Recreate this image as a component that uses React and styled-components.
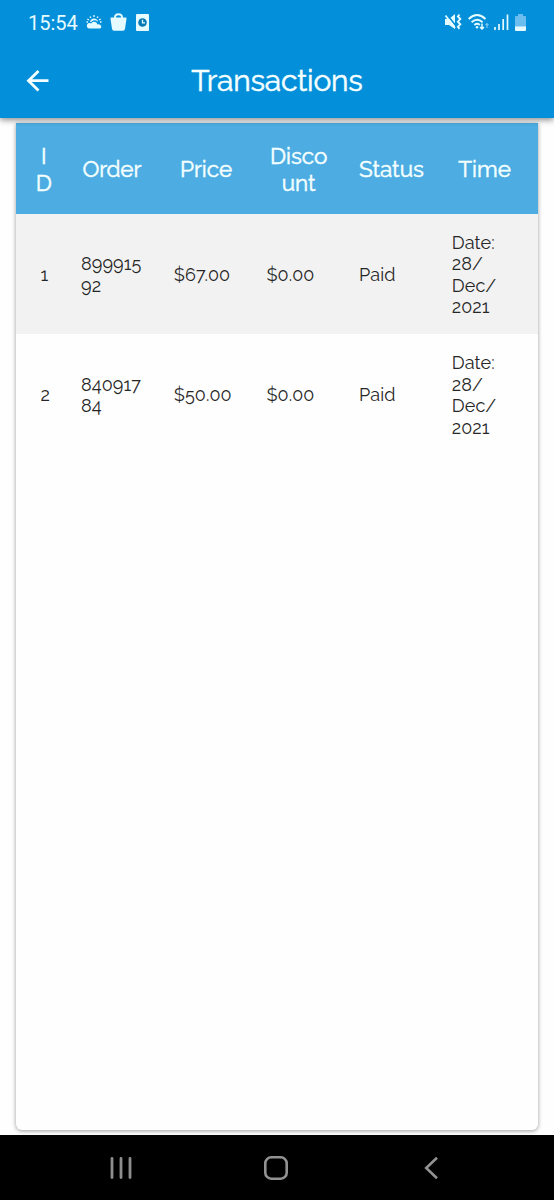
import React from "react";
import styled, { createGlobalStyle } from "styled-components";

const Global = createGlobalStyle`
  * { box-sizing: border-box; }
  html, body { margin: 0; background: #fff; }
  body { font-family: Raleway, Lato, "Open Sans", sans-serif; }
`;

const Screen = styled.div`
  width: 554px;
  height: 1200px;
  display: flex;
  flex-direction: column;
  background: #fefefe;
  overflow: hidden;
`;

const TopBar = styled.header`
  position: relative;
  flex: 0 0 118px;
  background: #048fda;
  color: #f4ffff;
  box-shadow: 0 2px 6px rgba(0, 0, 0, 0.45);
  z-index: 1;
`;

const StatusBar = styled.div`
  height: 44px;
  padding: 0 28px 0 28px;
  display: flex;
  align-items: center;
  justify-content: space-between;
  color: #e6fbff;
`;

const StatusGroup = styled.div`
  display: flex;
  align-items: center;
`;

const Clock = styled.span`
  font: 400 20px/24px Roboto, sans-serif;
  width: 58px;
  padding-top: 2px;
`;

const Icon = styled.svg`
  display: block;
  flex: none;
  overflow: visible;
  margin-right: ${(p) => p.$gap || 0}px;
`;

const TitleRow = styled.div`
  height: 74px;
  display: grid;
  grid-template-columns: 76px 1fr 76px;
  align-items: center;
`;

const BackButton = styled.button`
  border: 0;
  padding: 0 0 0 26px;
  background: none;
  color: inherit;
`;

const Title = styled.h1`
  margin: 0;
  text-align: center;
  font-size: 30px;
  line-height: 36px;
  font-weight: 400;
  letter-spacing: -0.2px;
  -webkit-text-stroke: 0.5px currentColor;
`;

const Content = styled.main`
  flex: 1;
  padding: 5px 16px 5px;
`;

const Card = styled.section`
  height: 100%;
  border-radius: 0 0 6px 6px;
  background: #fefefe;
  box-shadow: 0 1px 4px rgba(0, 0, 0, 0.4);
  overflow: hidden;
`;

const Row = styled.div`
  display: grid;
  grid-template-columns: 43.5px repeat(5, 92.7px);
  align-items: center;
  padding-left: 7px;
  height: 120.3px;
  color: #262626;
  background: ${(p) => (p.$shaded ? "#f2f2f2" : "transparent")};
`;

const HeadRow = styled(Row)`
  height: 90.7px;
  color: #f4ffff;
  background: #4dade2;
`;

const HeadCell = styled.div`
  text-align: center;
  font-size: 22.5px;
  line-height: 27px;
  white-space: pre-line;
  letter-spacing: ${(p) => p.$tracking || 0}px;
  -webkit-text-stroke: 0.5px currentColor;
  padding: 3px ${(p) => p.$right || 0}px 0 ${(p) => p.$left || 0}px;
`;

const Cell = styled.div`
  padding: 2px 0 0 ${(p) => p.$inset || 14.5}px;
  font-size: 18px;
  line-height: 21.6px;
  white-space: pre-line;
  font-variant-numeric: oldstyle-nums proportional-nums;
  letter-spacing: 0.1px;
`;

const NavBar = styled.nav`
  flex: 0 0 65px;
  background: #000;
  display: grid;
  grid-template-columns: repeat(3, 155.3px);
  justify-content: center;
  align-items: center;
  justify-items: center;
  padding-right: 2px;
`;

const columns = [
  { key: "id", label: "I\nD", inset: 17.5, right: 2 },
  { key: "order", label: "Order", tracking: -0.2, right: 2 },
  { key: "price", label: "Price", left: 1 },
  { key: "discount", label: "Disco\nunt", left: 1 },
  { key: "status", label: "Status", left: 1 },
  { key: "time", label: "Time", left: 2 },
];

const transactions = [
  { id: "1", order: "899915\n92", price: "$67.00", discount: "$0.00", status: "Paid", time: "Date:\n28/\nDec/\n2021" },
  { id: "2", order: "840917\n84", price: "$50.00", discount: "$0.00", status: "Paid", time: "Date:\n28/\nDec/\n2021" },
];

const WeatherIcon = () => (
  <Icon width="16" height="16" viewBox="0 0 16 16" fill="currentColor" $gap={8}>
    <path d="M3 14.5a2.8 2.8 0 0 1-.2-5.4c1.3-.4 2 .2 2.4.5C6 7.8 8.300 7.200 10 8.300c.8.5 1.200 1.300 1.300 2.100 1.900-.7 4 .4 4 2.300 0 1.200-.8 1.800-2 1.800z" />
    <path d="M4 8c.4-2 2-3.400 4-3.400S11.900 6 12.200 8c-.3-.3-.7-.7-1.200-1C9 6 7 6 5.200 8z" />
    <path d="M8 1v2M4 2.500l.9 1.500M12 2.500 11.100 4M1.300 5l1.700 1M14.700 5 13 6M.5 8h1.500M14 8h1.500" stroke="currentColor" strokeWidth="1.300" />
  </Icon>
);

const BagIcon = () => (
  <Icon width="17" height="18" viewBox="0 0 17 18" $gap={9}>
    <path d="M1.500 4.500h14q1.200 0 1 1.200L15 15.800q-.3 2-2 2H4q-1.700 0-2-2L.5 5.700q-.2-1.200 1-1.200z" fill="currentColor" />
    <path d="M5 6V4q0-2.800 3.500-2.800T12 4v2" fill="none" stroke="currentColor" strokeWidth="1.900" />
  </Icon>
);

const ClockCardIcon = () => (
  <Icon width="13" height="17" viewBox="0 0 13 17">
    <rect width="13" height="17" rx="1" fill="currentColor" />
    <circle cx="6.500" cy="8.500" r="4.300" fill="#0879b5" />
    <path d="M6.500 5.800v3h2.500" stroke="currentColor" strokeWidth="1.300" fill="none" />
  </Icon>
);

const MuteIcon = () => (
  <Icon width="17" height="16" viewBox="0 0 17 16" $gap={6}>
    <path d="M0 5h4l6-5v15l-6-4H0z" fill="currentColor" />
    <path d="M1.500 0l10 12.500" stroke="#048fda" strokeWidth="1.600" />
    <path d="M.5 1.500 10 14" stroke="currentColor" strokeWidth="1.700" />
    <path d="M14.500.5 12.900 2.500l2.400 2.600-2.400 2.600 2.400 2.600-2.400 2.600 1.600 2" fill="none" stroke="currentColor" strokeWidth="1.900" />
  </Icon>
);

const WifiIcon = () => (
  <Icon width="21" height="17" viewBox="0 0 21 17" fill="none" stroke="currentColor" strokeWidth="1.900" $gap={5}>
    <path d="M.7 5q8.300-7.800 16.800 0M3.600 8.200q5.500-5 11 0M6.400 11q2.700-2.300 5.400 0" />
    <circle cx="9" cy="13.200" r="1.200" fill="currentColor" stroke="none" />
    <path d="M14 9.500v5.500M12 13l2 2 2-2" strokeWidth="1.500" />
    <path d="M19 14V9.500M17.500 11 19 9.500l1.500 1.500" strokeWidth="1.200" opacity=".5" />
  </Icon>
);

const SignalIcon = () => (
  <Icon width="15" height="16" viewBox="0 0 15 16" stroke="currentColor" strokeWidth="1.700" $gap={6}>
    <path d="M1 16v-3M5 16v-6M9.200 16V5M13.500 16V.5" />
  </Icon>
);

const BatteryIcon = () => (
  <Icon width="11" height="17" viewBox="0 0 11 17">
    <path d="M3 0h5v2h2q1 0 1 1v10H0V3q0-1 1-1h2z" fill="#6bbdf0" />
    <path d="M0 12.500h11V16q0 1-1 1H1q-1 0-1-1z" fill="currentColor" />
  </Icon>
);

export default function App() {
  return (
    <>
      <Global />
      <Screen>
        <TopBar>
          <StatusBar>
            <StatusGroup>
              <Clock>15:54</Clock>
              <WeatherIcon />
              <BagIcon />
              <ClockCardIcon />
            </StatusGroup>
            <StatusGroup>
              <MuteIcon />
              <WifiIcon />
              <SignalIcon />
              <BatteryIcon />
            </StatusGroup>
          </StatusBar>
          <TitleRow>
            <BackButton aria-label="Back">
              <Icon width="24" height="22" viewBox="0 0 24 22" fill="none" stroke="currentColor" strokeWidth="2.800">
                <path d="M22.500 10.700H3M12.500 1 2.500 10.700l10 9.700" />
              </Icon>
            </BackButton>
            <Title>Transactions</Title>
          </TitleRow>
        </TopBar>
        <Content>
          <Card>
            <HeadRow>
              {columns.map((c) => (
                <HeadCell key={c.key} $tracking={c.tracking} $left={c.left} $right={c.right}>{c.label}</HeadCell>
              ))}
            </HeadRow>
            {transactions.map((t, i) => (
              <Row key={t.id} $shaded={i % 2 === 0}>
                {columns.map((c) => (
                  <Cell key={c.key} $inset={c.inset}>{t[c.key]}</Cell>
                ))}
              </Row>
            ))}
          </Card>
        </Content>
        <NavBar>
          <Icon width="22" height="22" viewBox="0 0 22 22" stroke="#8e8e8e" strokeWidth="2.800" strokeLinecap="round">
            <path d="M2 1.400v19.200M11 1.400v19.200M20 1.400v19.200" />
          </Icon>
          <Icon width="24" height="24" viewBox="0 0 24 24" fill="none" stroke="#929292" strokeWidth="2.600">
            <rect x="1.300" y="1.300" width="21.400" height="21.400" rx="6" />
          </Icon>
          <Icon width="14" height="22" viewBox="0 0 14 22" fill="none" stroke="#929292" strokeWidth="2.600">
            <path d="M13 .8 2.200 11 13 21.200" />
          </Icon>
        </NavBar>
      </Screen>
    </>
  );
}
